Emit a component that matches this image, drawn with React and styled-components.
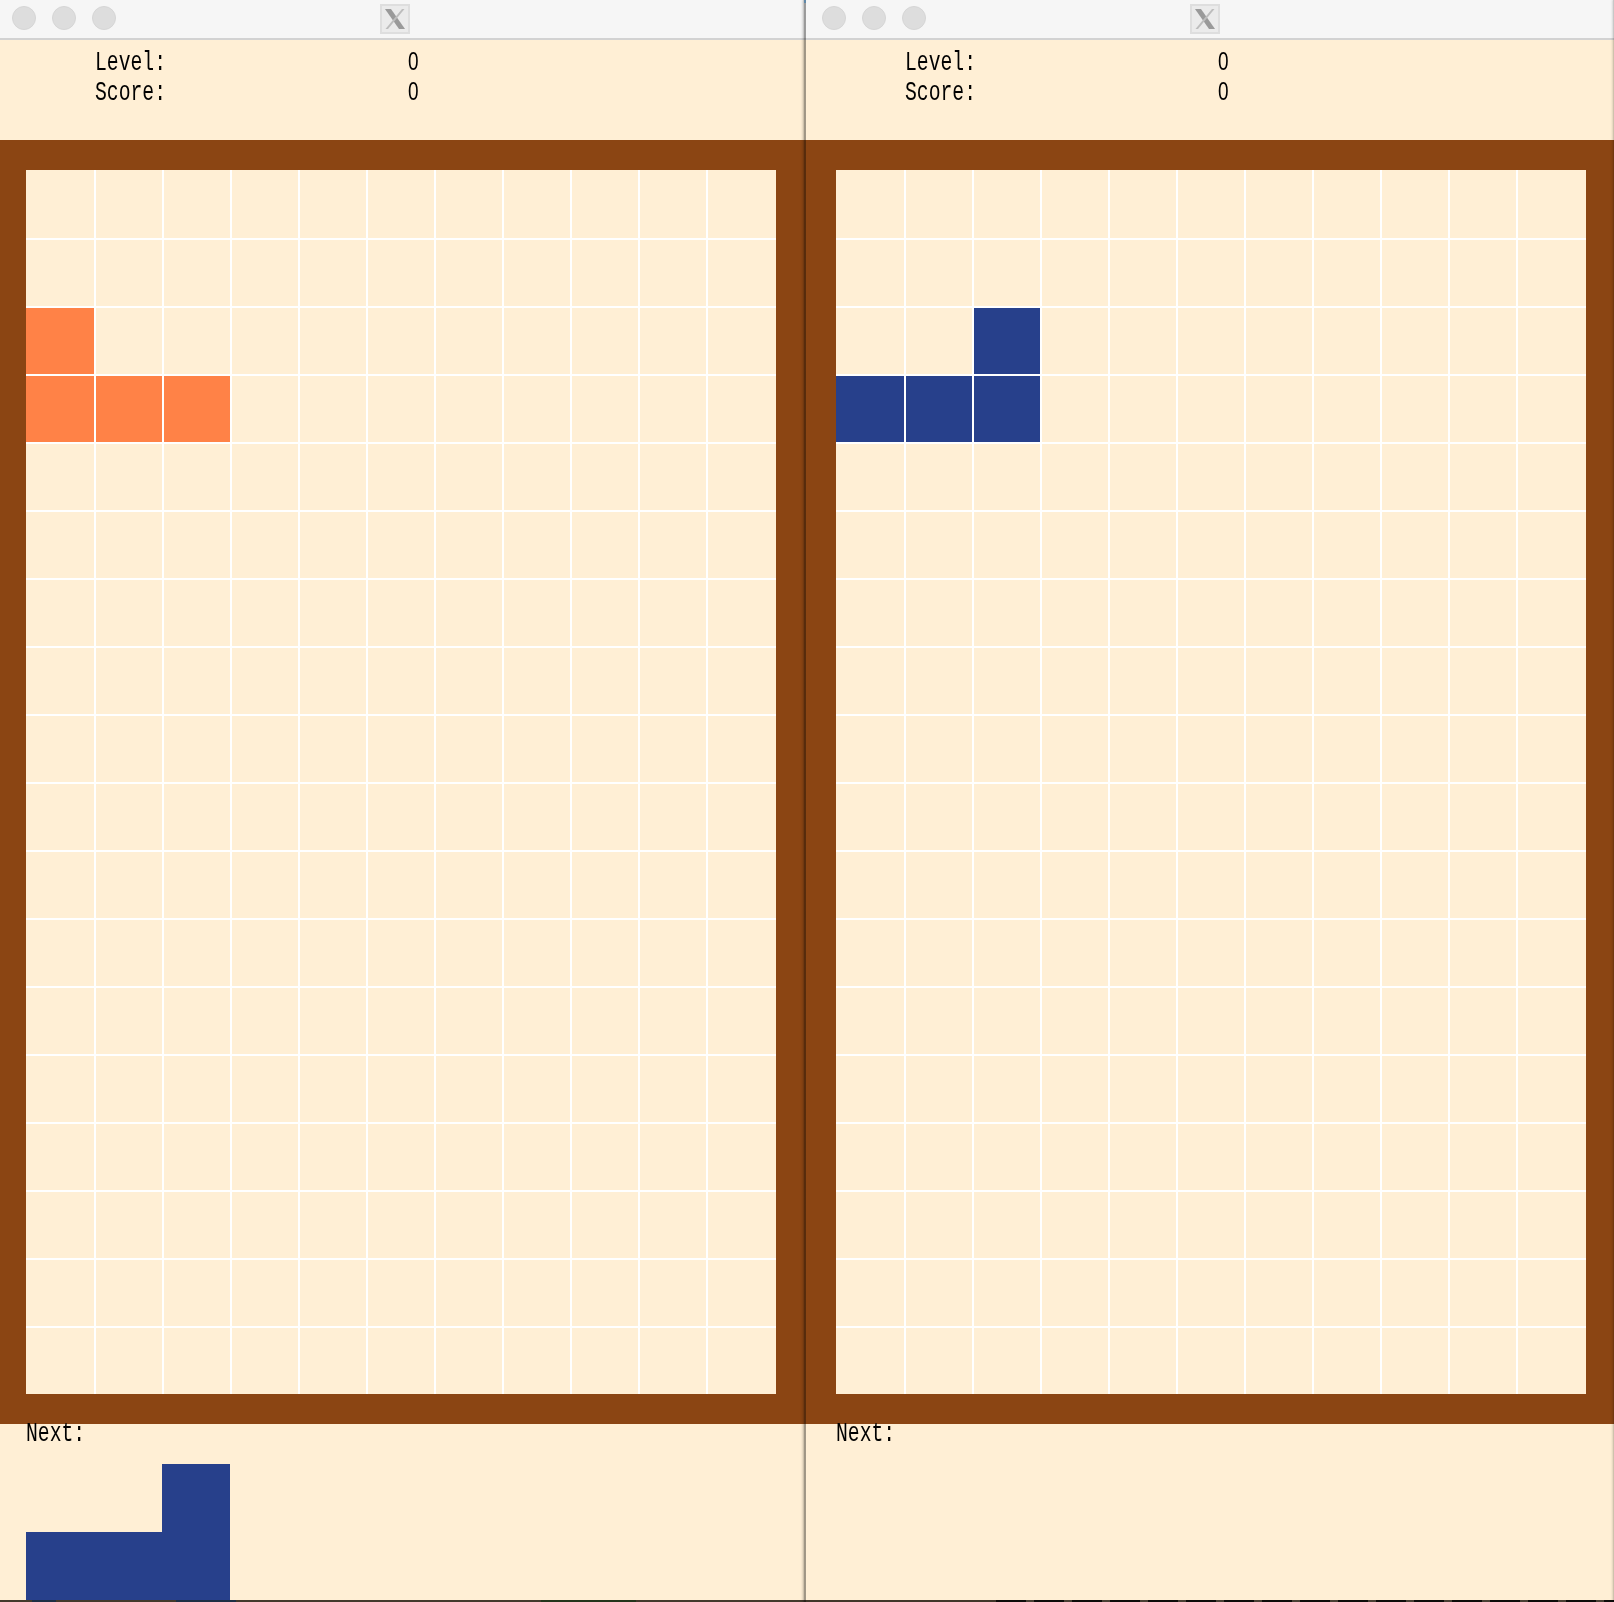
import React from 'react';
import styled, { createGlobalStyle } from 'styled-components';

const CREAM = '#ffefd5';
const BROWN = '#8b4513';
const ORANGE = '#ff8247';
const BLUE = '#27408b';

const COLS = 11;
const ROWS = 18;

const GlobalStyle = createGlobalStyle`
  html, body {
    margin: 0;
    padding: 0;
    background: ${CREAM};
    overflow: hidden;
  }
`;

const Desktop = styled.div`
  display: flex;
  width: 1620px;
  height: 1602px;
  margin-left: -4px;
`;

const Window = styled.section`
  position: relative;
  display: flex;
  flex-direction: column;
  flex: 0 0 810px;
  height: 1602px;
  background: ${CREAM};
`;

const Seam = styled.div`
  position: absolute;
  top: 0;
  right: 0;
  bottom: 0;
  width: 3px;
  background: linear-gradient(to right, rgba(0, 0, 0, 0.08), rgba(0, 0, 0, 0.38) 45%, rgba(0, 0, 0, 0.36));
  box-shadow: -1px 0 2px rgba(0, 0, 0, 0.12);

  &::before {
    content: "";
    position: absolute;
    top: 0;
    left: 1px;
    width: 4px;
    height: 3px;
    background: #5f88a8;
  }
`;

const TitleBar = styled.header`
  position: relative;
  display: flex;
  align-items: center;
  gap: 16px;
  flex: 0 0 40px;
  box-sizing: border-box;
  padding: 0 0 2px 16px;
  background: #f6f6f6;
  border-bottom: 2px solid #d2d2d2;
`;

const TrafficLight = styled.span`
  width: 24px;
  height: 24px;
  box-sizing: border-box;
  border-radius: 50%;
  background: #dddddd;
  border: 1px solid #d6d6d6;
`;

const AppIcon = styled.svg`
  position: absolute;
  left: 384px;
  top: 4px;
  width: 30px;
  height: 30px;
  filter: blur(0.6px);
`;

const Info = styled.div`
  display: grid;
  grid-template-columns: 313px auto;
  grid-auto-rows: 30px;
  align-content: start;
  justify-content: start;
  flex: 0 0 100px;
  box-sizing: border-box;
  padding: 8px 0 0 99px;
`;

const Label = styled.span`
  display: inline-block;
  font-family: "Liberation Mono", monospace;
  font-size: 27px;
  line-height: 30px;
  color: #000;
  transform: scaleX(0.73);
  transform-origin: left center;
  white-space: nowrap;
`;

const Value = styled(Label)`
  align-self: start;
  font-family: "Liberation Sans", sans-serif;
  font-size: 26px;
  line-height: 26px;
`;

const Frame = styled.div`
  flex: 0 0 auto;
  box-sizing: border-box;
  width: 810px;
  padding: 30px;
  background: ${BROWN};
`;

const Board = styled.div`
  display: grid;
  grid-template-columns: 68px repeat(${COLS - 2}, 66px) 68px;
  grid-template-rows: 68px repeat(${ROWS - 1}, 66px);
  gap: 2px;
  width: 750px;
  height: 1224px;
  background: #fff;
`;

const Cell = styled.div`
  background: ${(p) => p.$color || CREAM};
`;

const NextArea = styled.div`
  flex: 0 0 176px;
  box-sizing: border-box;
  padding-left: 30px;
`;

const NextLabel = styled(Label)`
  display: block;
  height: 34px;
  margin-top: -5px;
`;

const Preview = styled.div`
  display: grid;
  grid-template-columns: repeat(3, 68px);
  grid-template-rows: repeat(2, 68px);
  width: 204px;
  margin-top: 11px;
`;

const PreviewCell = styled.div`
  background: ${(p) => p.$color || 'transparent'};
`;

const BottomEdge = styled.div`
  flex: 0 0 2px;
  background: ${(p) =>
    p.$busy
      ? 'linear-gradient(to right, #403629 190px, transparent 190px), repeating-linear-gradient(to right, #0d0b09 0 30px, #4a4034 30px 38px)'
      : 'linear-gradient(to right, #43392c 0 36px, #1d2f45 36px 60px, #43392c 60px 180px, #1d2f45 180px 240px, #43392c 240px 545px, #24351c 545px 640px, #43392c 640px)'};
`;

const XLogo = () => (
  <AppIcon viewBox="0 0 30 30">
    <rect x="1" y="1" width="28" height="28" fill="#ebebeb" stroke="#dedede" strokeWidth="2" />
    <path d="M5 5h6l14 20h-6z" fill="#9a9a9a" />
    <path d="M22 5h2.5L8 25H5.5z" fill="#bdbdbd" />
  </AppIcon>
);

const TetrisWindow = ({ piece, color, next }) => {
  const taken = new Set(piece.map(([r, c]) => `${r}-${c}`));
  const cells = [];
  for (let r = 0; r < ROWS; r++) {
    for (let c = 0; c < COLS; c++) {
      cells.push(<Cell key={`${r}-${c}`} $color={taken.has(`${r}-${c}`) ? color : null} />);
    }
  }

  return (
    <Window>
      <TitleBar>
        <TrafficLight />
        <TrafficLight />
        <TrafficLight />
        <XLogo />
      </TitleBar>
      <Info>
        <Label>Level:</Label>
        <Value>0</Value>
        <Label>Score:</Label>
        <Value>0</Value>
      </Info>
      <Frame>
        <Board>{cells}</Board>
      </Frame>
      <NextArea>
        <NextLabel>Next:</NextLabel>
        {next && (
          <Preview>
            {next.map((filled, i) => (
              <PreviewCell key={i} $color={filled ? BLUE : null} />
            ))}
          </Preview>
        )}
      </NextArea>
      <BottomEdge $busy={!next} />
      <Seam />
    </Window>
  );
};

const jPiece = [[2, 2], [3, 0], [3, 1], [3, 2]];
const lPiece = [[2, 0], [3, 0], [3, 1], [3, 2]];

export default function App() {
  return (
    <>
      <GlobalStyle />
      <Desktop>
        <TetrisWindow piece={lPiece} color={ORANGE} next={[0, 0, 1, 1, 1, 1]} />
        <TetrisWindow piece={jPiece} color={BLUE} />
      </Desktop>
    </>
  );
}
